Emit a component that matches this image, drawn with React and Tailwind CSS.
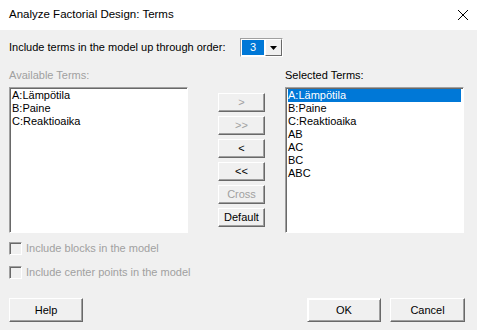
import React from "react";

const font = { fontFamily: '"Liberation Sans", Arial, sans-serif' };

const Btn = ({ children, disabled, className = "" }) => (
  <div
    className={`flex items-center justify-center bg-[#f0f0f0] border border-t-white border-l-white border-r-[#696969] border-b-[#696969] shadow-[inset_-1px_-1px_0_#a0a0a0] text-[11px] ${
      disabled ? "text-[#a0a0a0]" : "text-black"
    } ${className}`}
  >
    {children}
  </div>
);

const ListBox = ({ items, selected, className = "" }) => (
  <div
    className={`bg-white border border-t-[#a0a0a0] border-l-[#a0a0a0] border-r-white border-b-white shadow-[inset_1px_1px_0_#696969] pt-[1px] pl-[2px] pr-[2px] ${className}`}
  >
    {items.map((it, i) => (
      <div
        key={it}
        className={`h-[13px] leading-[13px] text-[11px] whitespace-nowrap ${
          i === selected ? "bg-[#0078d7] text-white" : "text-black"
        }`}
      >
        {it}
      </div>
    ))}
  </div>
);

const Check = ({ label }) => (
  <div className="flex items-center h-[14px]">
    <div className="w-[13px] h-[13px] bg-[#f0f0f0] border border-t-[#a0a0a0] border-l-[#a0a0a0] border-r-white border-b-white shadow-[inset_1px_1px_0_#696969]" />
    <span className="ml-[4px] text-[11px] text-[#a0a0a0] whitespace-nowrap">{label}</span>
  </div>
);

export default function App() {
  return (
    <div className="w-[477px] h-[330px] bg-[#f0f0f0] overflow-hidden" style={font}>
      <div className="h-[30px] bg-white flex items-center justify-between pl-[9px] pr-[8px]">
        <span className="text-[11.5px] text-black">Analyze Factorial Design: Terms</span>
        <svg width="12" height="12" viewBox="0 0 12 12">
          <path d="M1 1 L11 11 M11 1 L1 11" stroke="#000" strokeWidth="1" />
        </svg>
      </div>

      <div className="px-[9px]">
        <div className="flex items-center mt-[8px] h-[19px]">
          <span className="text-[11px] text-black w-[231px] whitespace-nowrap">
            Include terms in the model up through order:
          </span>
          <div className="flex h-[19px] w-[43px] border border-t-[#a0a0a0] border-l-[#a0a0a0] border-r-white border-b-white bg-white">
            <div className="flex-1 m-[1px] bg-[#0078d7] text-white text-[11px] leading-[15px] pl-[8px]">3</div>
            <div className="w-[17px] bg-[#f0f0f0] border border-t-white border-l-white border-r-[#696969] border-b-[#696969] flex items-center justify-center">
              <svg width="7" height="4" viewBox="0 0 7 4">
                <path d="M0 0 H7 L3.5 4 Z" fill="#000" />
              </svg>
            </div>
          </div>
        </div>

        <div className="flex mt-[11px] h-[14px] text-[11px] leading-[14px]">
          <span className="w-[276px] text-[#a0a0a0]">Available Terms:</span>
          <span className="text-black">Selected Terms:</span>
        </div>

        <div className="flex mt-[5px] h-[146px]">
          <ListBox
            items={["A:Lämpötila", "B:Paine", "C:Reaktioaika"]}
            selected={-1}
            className="w-[179px] h-[146px]"
          />
          <div className="flex flex-col gap-[4px] ml-[30px] mt-[6px] w-[47px]">
            <Btn disabled className="h-[19px]">&gt;</Btn>
            <Btn disabled className="h-[19px]">&gt;&gt;</Btn>
            <Btn className="h-[19px]">&lt;</Btn>
            <Btn className="h-[19px]">&lt;&lt;</Btn>
            <Btn disabled className="h-[19px]">Cross</Btn>
            <Btn className="h-[19px]">Default</Btn>
          </div>
          <ListBox
            items={["A:Lämpötila", "B:Paine", "C:Reaktioaika", "AB", "AC", "BC", "ABC"]}
            selected={0}
            className="ml-[20px] w-[179px] h-[146px]"
          />
        </div>

        <div className="flex flex-col gap-[10px] mt-[8px]">
          <Check label="Include blocks in the model" />
          <Check label="Include center points in the model" />
        </div>

        <div className="flex mt-[19px]">
          <Btn className="w-[74px] h-[24px]">Help</Btn>
          <div className="flex-1" />
          <Btn className="w-[74px] h-[24px] border-[#696969] shadow-[inset_1px_1px_0_#fff,inset_-1px_-1px_0_#a0a0a0]">OK</Btn>
          <Btn className="w-[75px] h-[24px] ml-[9px] mr-[3px]">Cancel</Btn>
        </div>
      </div>
    </div>
  );
}
